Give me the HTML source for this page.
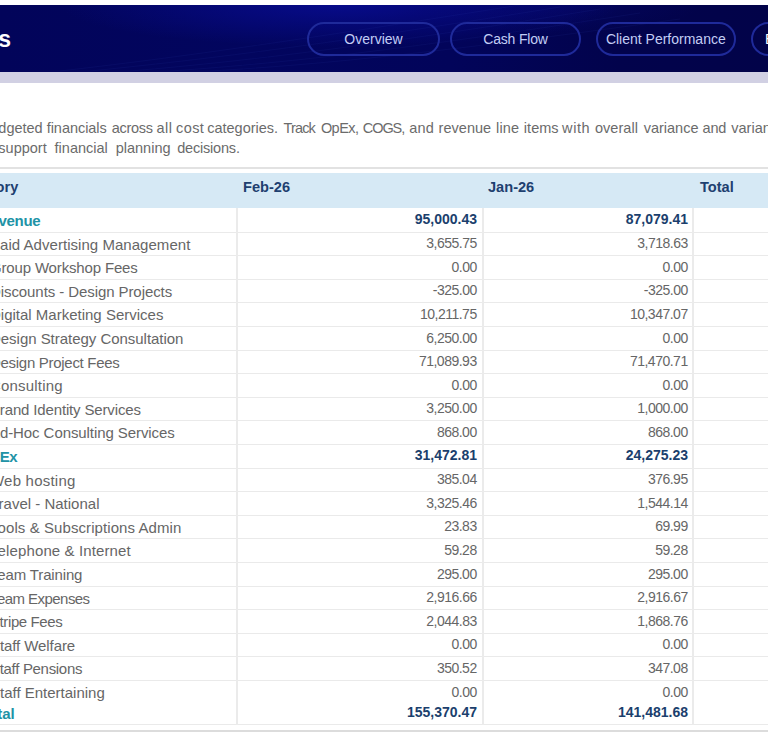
<!DOCTYPE html>
<html><head><meta charset="utf-8"><style>
html,body{margin:0;padding:0;width:768px;height:750px;overflow:hidden;background:#fff;font-family:"Liberation Sans",sans-serif;}
#hdr{position:absolute;left:0;top:5px;width:768px;height:66.6px;overflow:hidden;
 background:
  radial-gradient(ellipse 280px 42px at 340px 0px, rgba(8,12,145,0.85), rgba(8,12,145,0) 100%),
  radial-gradient(ellipse 140px 30px at 560px 0px, rgba(8,12,130,0.3), rgba(8,12,130,0) 100%),
  linear-gradient(90deg, #02045a 0px, #02055e 250px, #02045a 450px, #02034c 620px, #020349 768px);}
#hdr svg{position:absolute;left:0;top:0;}
#band{position:absolute;left:0;top:71.6px;width:768px;height:11.2px;background:#d1d0e3;}
.title{position:absolute;right:757px;top:19px;color:#fff;font-weight:700;font-size:23px;white-space:nowrap;line-height:30px;}
.btn{position:absolute;top:17px;height:30px;border:2px solid #1f2a9a;border-radius:18px;color:#c2cdf5;font-size:14px;text-align:center;line-height:31px;white-space:nowrap;box-sizing:content-box;}
.w{position:absolute;color:#6b6b6b;font-size:14.5px;line-height:20px;white-space:nowrap;}
#sep{position:absolute;left:0;top:167px;width:768px;height:1.5px;background:#e2e2e2;}
#th{position:absolute;left:0;top:173.4px;width:768px;height:34.2px;background:#d6e9f5;color:#1e4070;font-weight:700;font-size:14.6px;}
#th span{position:absolute;top:5px;line-height:18px;white-space:nowrap;}
.row{position:absolute;left:0;width:768px;height:23.6px;}
.row span{position:absolute;white-space:nowrap;}
.c{left:-10px;top:4px;line-height:18px;font-size:15px;color:#666;}
.p{left:-20px;top:4.3px;line-height:18px;font-size:15px;color:#2193a6;font-weight:700;}
.n1,.n2{top:3.5px;line-height:16px;font-size:14px;letter-spacing:-0.5px;margin-right:0.3px;color:#666;text-align:right;}
.n1{right:291px;}
.n2{right:80px;}
.b{font-weight:700;font-size:14px;letter-spacing:0;margin-right:0;color:#1b3f6d;margin-top:-0.5px;}
.hl{position:absolute;left:0;width:768px;height:1px;background:#eaeaea;}
.vl{position:absolute;top:207.6px;width:2px;height:117px;background:#ebebeb;}
</style></head><body>
<div id="hdr">
 <svg width="768" height="67" viewBox="0 0 768 67">
  <g fill="none" stroke="rgba(70,90,210,0.08)" stroke-width="1">
   <path d="M60 66 C 200 50, 330 30, 520 0"/>
   <path d="M90 66 C 230 52, 360 34, 560 2"/>
   <path d="M130 66 C 260 55, 390 38, 600 4"/>
   <path d="M170 66 C 300 57, 420 42, 640 8"/>
   <path d="M210 66 C 330 59, 450 46, 680 14"/>
  </g>
 </svg>
 <div class="title">Budget vs Actuals</div>
 <div class="btn" style="left:307px;width:129px">Overview</div>
 <div class="btn" style="left:450px;width:127px;letter-spacing:-0.2px">Cash Flow</div>
 <div class="btn" style="left:596px;width:135.6px">Client Performance</div>
 <div class="btn" style="left:751px;width:140px;color:#fff;text-align:left;padding-left:12px">Budget vs Actuals</div>
</div>
<div id="band"></div>
<span class="w" style="left:-1.7px;top:118px">dgeted</span>
<span class="w" style="left:46.7px;top:118px;letter-spacing:-0.04px">financials</span>
<span class="w" style="left:111.7px;top:118px;letter-spacing:-0.28px">across</span>
<span class="w" style="left:156.6px;top:118px;letter-spacing:0.39px">all</span>
<span class="w" style="left:176.1px;top:118px;letter-spacing:0.37px">cost</span>
<span class="w" style="left:207.3px;top:118px;letter-spacing:-0.02px">categories.</span>
<span class="w" style="left:283.6px;top:118px;letter-spacing:-0.88px">Track</span>
<span class="w" style="left:320.9px;top:118px;letter-spacing:-0.55px">OpEx,</span>
<span class="w" style="left:362.8px;top:118px;letter-spacing:-1.08px">COGS,</span>
<span class="w" style="left:409.3px;top:118px;letter-spacing:0.10px">and</span>
<span class="w" style="left:438.6px;top:118px;letter-spacing:0.03px">revenue</span>
<span class="w" style="left:496.1px;top:118px;letter-spacing:0.11px">line</span>
<span class="w" style="left:523.8px;top:118px;letter-spacing:0.04px">items</span>
<span class="w" style="left:562.1px;top:118px;letter-spacing:0.60px">with</span>
<span class="w" style="left:594.9px;top:118px;letter-spacing:0.05px">overall</span>
<span class="w" style="left:643.7px;top:118px">variance</span>
<span class="w" style="left:702.6px;top:118px;letter-spacing:-0.20px">and</span>
<span class="w" style="left:731.3px;top:118px">variance</span>
<span class="w" style="left:-1.7px;top:138px">support</span>
<span class="w" style="left:54.6px;top:138px">financial</span>
<span class="w" style="left:115.7px;top:138px">planning</span>
<span class="w" style="left:177.2px;top:138px;letter-spacing:-0.19px">decisions.</span>
<div id="sep"></div>
<div id="th"><span style="left:-45px">Category</span><span style="left:243px">Feb-26</span><span style="left:488px">Jan-26</span><span style="left:700px">Total</span></div>
<div class="hl" style="top:231.6px"></div>
<div class="hl" style="top:255.2px"></div>
<div class="hl" style="top:278.8px"></div>
<div class="hl" style="top:302.4px"></div>
<div class="hl" style="top:326.0px"></div>
<div class="hl" style="top:349.6px"></div>
<div class="hl" style="top:373.2px"></div>
<div class="hl" style="top:396.8px"></div>
<div class="hl" style="top:420.4px"></div>
<div class="hl" style="top:444.0px"></div>
<div class="hl" style="top:467.6px"></div>
<div class="hl" style="top:491.2px"></div>
<div class="hl" style="top:514.8px"></div>
<div class="hl" style="top:538.4px"></div>
<div class="hl" style="top:562.0px"></div>
<div class="hl" style="top:585.6px"></div>
<div class="hl" style="top:609.2px"></div>
<div class="hl" style="top:632.8px"></div>
<div class="hl" style="top:656.4px"></div>
<div class="hl" style="top:680.0px"></div>
<div class="hl" style="top:724px"></div>
<div class="hl" style="top:730px;height:2px;background:#dcdcdc"></div>
<div class="vl" style="left:236px;height:517px"></div>
<div class="vl" style="left:482px;height:517px"></div>
<div class="vl" style="left:692px;height:517px"></div>
<div class="row" style="top:207.6px"><span class="p" style="letter-spacing:-0.32px">Revenue</span><span class="n1 b">95,000.43</span><span class="n2 b">87,079.41</span></div>
<div class="row" style="top:231.6px"><span class="c" style="letter-spacing:0.04px">Paid Advertising Management</span><span class="n1 ">3,655.75</span><span class="n2 ">3,718.63</span></div>
<div class="row" style="top:255.2px"><span class="c" style="letter-spacing:-0.16px">Group Workshop Fees</span><span class="n1 ">0.00</span><span class="n2 ">0.00</span></div>
<div class="row" style="top:278.8px"><span class="c" style="letter-spacing:-0.08px">Discounts - Design Projects</span><span class="n1 ">-325.00</span><span class="n2 ">-325.00</span></div>
<div class="row" style="top:302.4px"><span class="c">Digital Marketing Services</span><span class="n1 ">10,211.75</span><span class="n2 ">10,347.07</span></div>
<div class="row" style="top:326.0px"><span class="c" style="letter-spacing:-0.03px">Design Strategy Consultation</span><span class="n1 ">6,250.00</span><span class="n2 ">0.00</span></div>
<div class="row" style="top:349.6px"><span class="c" style="letter-spacing:-0.29px">Design Project Fees</span><span class="n1 ">71,089.93</span><span class="n2 ">71,470.71</span></div>
<div class="row" style="top:373.2px"><span class="c" style="letter-spacing:0.19px">Consulting</span><span class="n1 ">0.00</span><span class="n2 ">0.00</span></div>
<div class="row" style="top:396.8px"><span class="c" style="letter-spacing:-0.15px">Brand Identity Services</span><span class="n1 ">3,250.00</span><span class="n2 ">1,000.00</span></div>
<div class="row" style="top:420.4px"><span class="c" style="letter-spacing:-0.08px">Ad-Hoc Consulting Services</span><span class="n1 ">868.00</span><span class="n2 ">868.00</span></div>
<div class="row" style="top:444.0px"><span class="p" style="letter-spacing:-0.55px">OpEx</span><span class="n1 b">31,472.81</span><span class="n2 b">24,275.23</span></div>
<div class="row" style="top:467.6px"><span class="c" style="letter-spacing:0.22px">Web hosting</span><span class="n1 ">385.04</span><span class="n2 ">376.95</span></div>
<div class="row" style="top:491.2px"><span class="c">Travel - National</span><span class="n1 ">3,325.46</span><span class="n2 ">1,544.14</span></div>
<div class="row" style="top:514.8px"><span class="c" style="letter-spacing:0.08px">Tools &amp; Subscriptions Admin</span><span class="n1 ">23.83</span><span class="n2 ">69.99</span></div>
<div class="row" style="top:538.4px"><span class="c" style="letter-spacing:0.12px">Telephone &amp; Internet</span><span class="n1 ">59.28</span><span class="n2 ">59.28</span></div>
<div class="row" style="top:562.0px"><span class="c" style="letter-spacing:-0.15px">Team Training</span><span class="n1 ">295.00</span><span class="n2 ">295.00</span></div>
<div class="row" style="top:585.6px"><span class="c" style="letter-spacing:-0.55px">Team Expenses</span><span class="n1 ">2,916.66</span><span class="n2 ">2,916.67</span></div>
<div class="row" style="top:609.2px"><span class="c" style="letter-spacing:-0.40px">Stripe Fees</span><span class="n1 ">2,044.83</span><span class="n2 ">1,868.76</span></div>
<div class="row" style="top:632.8px"><span class="c" style="letter-spacing:-0.08px">Staff Welfare</span><span class="n1 ">0.00</span><span class="n2 ">0.00</span></div>
<div class="row" style="top:656.4px"><span class="c" style="letter-spacing:-0.31px">Staff Pensions</span><span class="n1 ">350.52</span><span class="n2 ">347.08</span></div>
<div class="row" style="top:680.0px"><span class="c">Staff Entertaining</span><span class="n1 ">0.00</span><span class="n2 ">0.00</span></div>
<div class="row tot" style="top:704px"><span class="p" style="top:1px">Total</span><span class="n1 b" style="top:0px">155,370.47</span><span class="n2 b" style="top:0px">141,481.68</span></div>
</body></html>
